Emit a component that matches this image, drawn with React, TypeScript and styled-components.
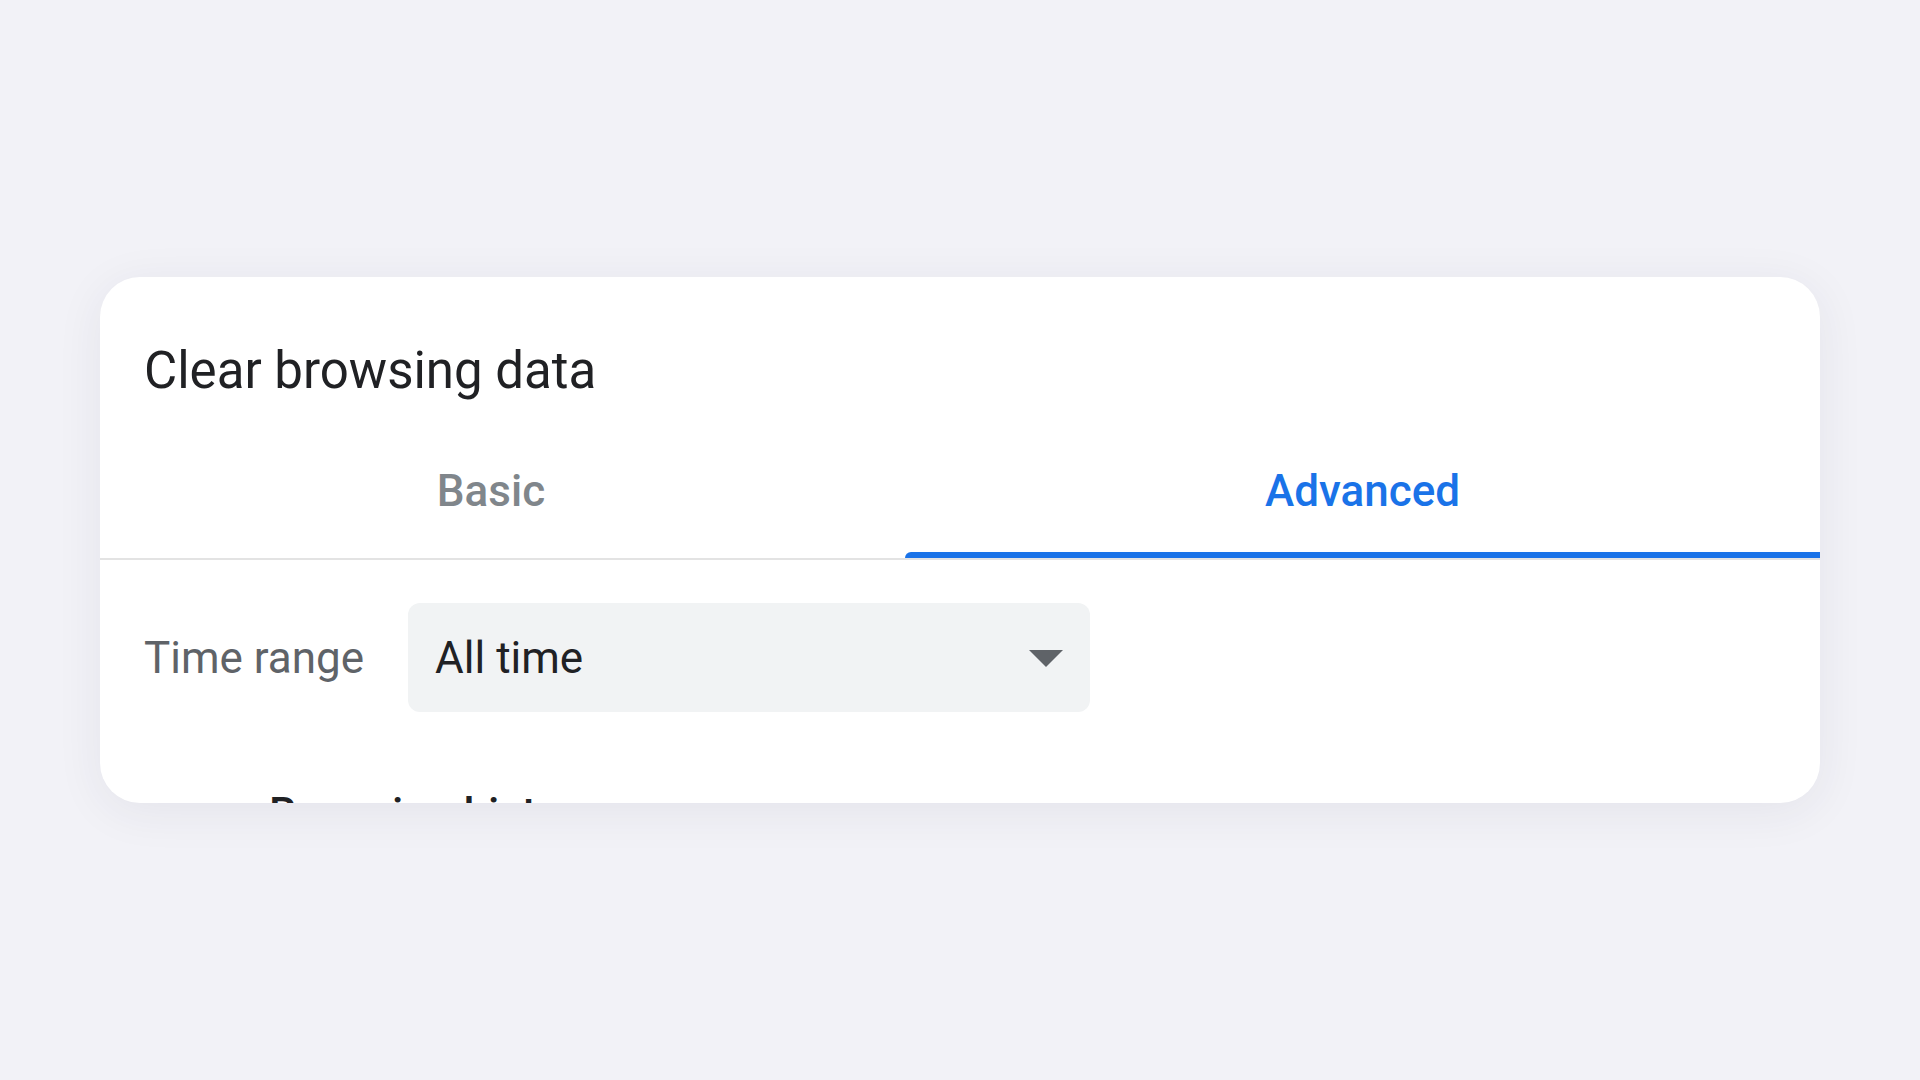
import React, { useState } from 'react';
import styled, { createGlobalStyle } from 'styled-components';

const GlobalStyle = createGlobalStyle`
  html, body {
    margin: 0;
    padding: 0;
    background: #f2f2f7;
    font-family: Roboto, 'Liberation Sans', sans-serif;
  }
`;

const Page = styled.div`
  min-height: 100vh;
  display: flex;
  align-items: center;
  justify-content: center;
`;

const Dialog = styled.div`
  width: 1720px;
  height: 526px;
  box-sizing: border-box;
  padding-top: 63px;
  background: #ffffff;
  border-radius: 40px;
  box-shadow: 0 8px 48px rgba(40, 40, 70, 0.07);
  overflow: hidden;
  display: flex;
  flex-direction: column;
`;

const Title = styled.h1`
  margin: 0;
  padding: 0 44px;
  font-size: 51px;
  line-height: 61px;
  font-weight: 400;
  color: #202124;
`;

const TabBar = styled.div`
  display: grid;
  grid-template-columns: 782px 915px;
  column-gap: 23px;
  border-bottom: 2px solid #e3e3e3;
`;

const Tab = styled.button<{ $active: boolean }>`
  display: flex;
  flex-direction: column;
  align-items: center;
  padding: 64px 0 0;
  border: none;
  background: none;
  cursor: pointer;
  font-family: inherit;
  font-size: 44px;
  line-height: 52px;
  font-weight: 500;
  color: ${(p) => (p.$active ? '#1a73e8' : '#80868b')};
`;

const TabLabel = styled.span`
  padding-bottom: 35px;
`;

const Indicator = styled.span<{ $active: boolean }>`
  align-self: stretch;
  height: 6px;
  border-radius: 6px 0 0 0;
  background: ${(p) => (p.$active ? '#1a73e8' : 'transparent')};
`;

const Body = styled.div`
  padding: 43px 44px 0;
  display: flex;
  flex-direction: column;
`;

const FieldRow = styled.div`
  display: flex;
  align-items: center;
  gap: 44px;
`;

const FieldLabel = styled.span`
  font-size: 44px;
  line-height: 56px;
  color: #5f6368;
`;

const Select = styled.div`
  width: 682px;
  height: 109px;
  box-sizing: border-box;
  padding: 0 27px;
  border-radius: 12px;
  background: #f1f3f4;
  display: flex;
  align-items: center;
  justify-content: space-between;
  font-size: 44px;
  line-height: 56px;
  color: #202124;
`;

const Arrow = styled.svg`
  width: 34px;
  height: 17px;
  fill: #5f6368;
  margin-top: 2px;
`;

const OptionRow = styled.div`
  display: flex;
  align-items: center;
  gap: 44px;
  margin-top: 76px;
  padding-left: 12px;
`;

const Checkbox = styled.span`
  width: 40px;
  height: 40px;
  border-radius: 6px;
  background: #1a73e8;
  flex-shrink: 0;
`;

const OptionText = styled.div`
  display: flex;
  flex-direction: column;
`;

const OptionTitle = styled.span`
  font-size: 44px;
  line-height: 52px;
  font-weight: 500;
  color: #202124;
  padding-left: 29px;
`;

const OptionSub = styled.span`
  font-size: 36px;
  line-height: 48px;
  color: #5f6368;
  padding-left: 29px;
`;

export default function App() {
  const [tab, setTab] = useState<'basic' | 'advanced'>('advanced');

  return (
    <>
      <GlobalStyle />
      <Page>
        <Dialog>
          <Title>Clear browsing data</Title>
          <TabBar>
            <Tab $active={tab === 'basic'} onClick={() => setTab('basic')}>
              <TabLabel>Basic</TabLabel>
              <Indicator $active={tab === 'basic'} />
            </Tab>
            <Tab $active={tab === 'advanced'} onClick={() => setTab('advanced')}>
              <TabLabel>Advanced</TabLabel>
              <Indicator $active={tab === 'advanced'} />
            </Tab>
          </TabBar>
          <Body>
            <FieldRow>
              <FieldLabel>Time range</FieldLabel>
              <Select>
                <span>All time</span>
                <Arrow viewBox="0 0 34 17">
                  <path d="M0 0 L34 0 L17 17 Z" />
                </Arrow>
              </Select>
            </FieldRow>
            <OptionRow>
              <Checkbox />
              <OptionText>
                <OptionTitle>Browsing history</OptionTitle>
                <OptionSub>Clears history from all synced devices</OptionSub>
              </OptionText>
            </OptionRow>
          </Body>
        </Dialog>
      </Page>
    </>
  );
}
